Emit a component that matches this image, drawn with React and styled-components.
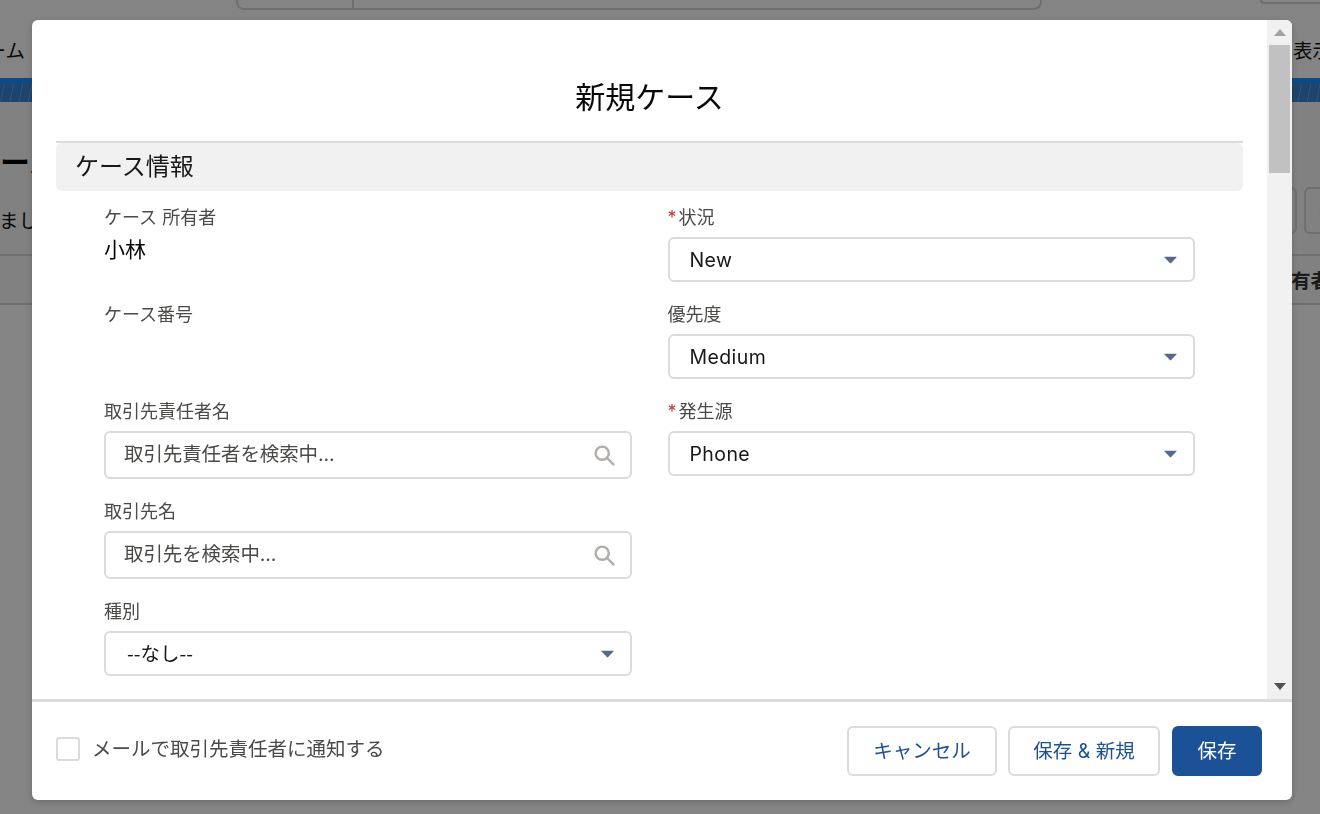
import React from "react";
import styled, { createGlobalStyle } from "styled-components";

const Global = createGlobalStyle`
  html, body { margin: 0; padding: 0; height: 100%; overflow: hidden; background: #fff; }
  * { box-sizing: border-box; }
  body { font-family: Inter, "Noto Sans CJK JP", sans-serif; color: #181818; }
`;

/* ---- page behind the dialog ---- */
const Page = styled.div`
  width: 1320px;
  height: 814px;
  overflow: hidden;
  background: #fafafa;
`;
const TopBar = styled.div`
  height: 10px;
  display: flex;
  justify-content: space-between;
  padding-left: 236px;
`;
const SearchStub = styled.div`
  width: 806px;
  height: 10px;
  border: 2px solid #d2d2d2;
  border-top: 0;
  border-radius: 0 0 8px 8px;
  display: flex;
`;
const SearchScope = styled.div`
  width: 116px;
  border-right: 2px solid #d2d2d2;
`;
const TopRightStub = styled.div`
  width: 60px;
  height: 4px;
  border: 2px solid #d2d2d2;
  border-top: 0;
  border-right: 0;
  border-radius: 0 0 0 8px;
`;
const NavRow = styled.div`
  height: 68px;
  display: flex;
  justify-content: space-between;
  align-items: center;
  font-size: 19.5px;
  color: #111;
  padding-top: 10px;
  overflow: hidden;
`;
const NavLeft = styled.span`
  margin-left: -33px;
`;
const NavRight = styled.span`
  margin-right: -12px;
  white-space: nowrap;
`;
const Stripe = styled.div`
  height: 24px;
  background:
    linear-gradient(#1a8cf8 0 6px, transparent 6px),
    repeating-linear-gradient(102deg, #3a82d0 0 5px, #5e9bd2 5px 6px, #3a82d0 6px 9px);
`;
const TitleArea = styled.div`
  height: 154px;
  background: #f3f3f3;
  border-bottom: 2px solid #d2d2d2;
  display: flex;
  justify-content: space-between;
  padding-top: 38px;
`;
const TitleText = styled.div`
  display: flex;
  flex-direction: column;
  margin-left: -30px;
  white-space: nowrap;
`;
const PageHeading = styled.div`
  font-size: 30px;
  font-weight: 700;
  line-height: 44px;
  color: #000;
`;
const PageNote = styled.div`
  font-size: 19.5px;
  line-height: 28px;
  margin-top: 23px;
  margin-left: 29px;
  color: #111;
`;
const PageActions = styled.div`
  display: flex;
  gap: 7px;
  margin-top: 47px;
  margin-right: -60px;
`;
const PageAction = styled.div`
  width: 76px;
  height: 47px;
  border: 2px solid #d2d2d2;
  border-radius: 6px;
  background: #f3f3f3;
  padding: 7px 0 0 13px;
  font-size: 19.5px;
  line-height: 28px;
  color: #aaa;
  white-space: nowrap;
`;
const TableHead = styled.div`
  height: 49px;
  background: #f3f3f3;
  border-bottom: 2px solid #d2d2d2;
  display: flex;
  justify-content: flex-end;
  align-items: center;
  font-size: 19.5px;
  font-weight: 700;
  color: #333;
  overflow: hidden;
`;
const TableHeadCell = styled.span`
  margin-right: -10px;
  white-space: nowrap;
`;

/* ---- dialog ---- */
const Scrim = styled.div`
  position: fixed;
  inset: 0;
  background: rgba(0, 0, 0, 0.47);
  display: flex;
  align-items: flex-start;
  padding: 20px 0 0 32px;
`;
const Modal = styled.div`
  width: 1260px;
  height: 780px;
  background: #fff;
  border-radius: 6px;
  overflow: hidden;
  display: flex;
  flex-direction: column;
  box-shadow: 0 2px 6px rgba(0, 0, 0, 0.2);
`;
const Upper = styled.div`
  height: 679px;
  display: flex;
  flex: none;
`;
const Body = styled.div`
  flex: 1;
  padding: 0 24px;
  overflow: hidden;
`;
const Title = styled.h2`
  margin: 0;
  padding: 56px 0 23px;
  text-align: center;
  font-size: 30px;
  line-height: 42px;
  font-weight: 400;
  color: #080707;
`;
const Section = styled.div`
  border-top: 2px solid #dddbda;
`;
const SectionHeading = styled.h3`
  margin: 0;
  height: 48px;
  padding: 0 0 5px 19px;
  display: flex;
  align-items: center;
  background: #f1f1f1;
  border-radius: 6px;
  font-size: 24px;
  font-weight: 400;
  color: #181818;
`;
const FormGrid = styled.div`
  display: grid;
  grid-template-columns: 1fr 1fr;
  column-gap: 36px;
  padding: 14px 48px 0;
`;
const Column = styled.div`
  display: flex;
  flex-direction: column;
`;
const Field = styled.div`
  padding-bottom: 20px;
`;
const Label = styled.div`
  height: 24px;
  line-height: 26px;
  margin-bottom: 8px;
  font-size: 18px;
  color: #4a4a48;
  white-space: nowrap;
`;
const Required = styled.span`
  color: #c23934;
  margin-right: 2px;
  font-size: 18px;
`;
const Value = styled.div`
  min-height: 53px;
  margin-top: -8px;
  padding-top: 6px;
  font-size: 21px;
  line-height: 30px;
  color: #080707;
`;
const SelectBox = styled.div`
  height: 45px;
  border: 2px solid #dddbda;
  border-radius: 6px;
  background: #fff;
  display: flex;
  align-items: center;
  justify-content: space-between;
  padding: 0 16px 0 20px;
  font-size: 19.5px;
  letter-spacing: 0.4px;
  color: #181818;
`;
const NoneValue = styled.span`
  font-family: "Noto Sans CJK JP", sans-serif;
  letter-spacing: 0;
  margin-left: 1px;
  margin-top: -3px;
`;
const InputBox = styled.div`
  height: 48px;
  border: 2px solid #dddbda;
  border-radius: 6px;
  background: #fff;
  display: flex;
  align-items: center;
  padding: 0 15px 0 18px;
`;
const SearchInput = styled.input`
  flex: 1;
  min-width: 0;
  border: 0;
  outline: 0;
  padding: 0 0 3px;
  background: transparent;
  font-family: inherit;
  font-size: 19.5px;
  letter-spacing: -0.1px;
  color: #3e3e3c;
  &::placeholder { color: #4a4a48; opacity: 1; }
`;
const Scrollbar = styled.div`
  width: 25px;
  flex: none;
  background: #f1f1f1;
  display: flex;
  flex-direction: column;
  align-items: center;
`;
const ScrollButton = styled.div`
  height: 25px;
  flex: none;
  display: flex;
  align-items: center;
  justify-content: center;
  width: 100%;
  margin-top: ${(p) => (p.$end ? "auto" : "0")};
`;
const Thumb = styled.div`
  width: 21px;
  height: 128px;
  background: #c1c1c1;
`;
const Footer = styled.div`
  flex: 1;
  border-top: 3px solid #dddbda;
  display: flex;
  align-items: center;
  justify-content: space-between;
  padding: 0 30px 0 24px;
`;
const Notify = styled.label`
  display: flex;
  align-items: center;
  gap: 12px;
  font-size: 19.5px;
  line-height: 24px;
  color: #4a4a48;
  margin-top: -5px;
`;
const Check = styled.input`
  appearance: none;
  margin: 0;
  width: 24px;
  height: 24px;
  border: 2px solid #dddbda;
  border-radius: 3px;
  background: #fff;
`;
const Actions = styled.div`
  display: flex;
  gap: 12px;
`;
const ActionsCancel = styled.div`
  margin-right: -1px;
`;
const Button = styled.button`
  height: 50px;
  width: ${(p) => p.$w}px;
  padding: 0 0 3px;
  border-radius: 6px;
  border: 2px solid ${(p) => (p.$primary ? "#1b5297" : "#dddbda")};
  background: ${(p) => (p.$primary ? "#1b5297" : "#fff")};
  color: ${(p) => (p.$primary ? "#fff" : "#1b5297")};
  font-family: inherit;
  font-size: 19.5px;
`;

const Caret = () => (
  <svg width="13" height="8" viewBox="0 0 14 8" aria-hidden="true">
    <path d="M1 0.5h12c.5 0 .7.5.4.9L7.4 7.5c-.2.2-.6.2-.8 0L.6 1.4C.3 1 .5.5 1 .5z" fill="#54698d" />
  </svg>
);

const SearchIcon = () => (
  <svg width="21" height="21" viewBox="0 0 21 21" fill="none" stroke="#b0adab" strokeWidth="2.4" aria-hidden="true">
    <circle cx="8.2" cy="8.2" r="6.6" />
    <path d="M13 13l6.4 6.4" strokeLinecap="round" />
  </svg>
);

const ScrollArrow = ({ down }) => (
  <svg width="12" height="7" viewBox="0 0 12 7" aria-hidden="true">
    <path d={down ? "M0 0h12L6 7z" : "M0 7h12L6 0z"} fill={down ? "#505050" : "#a3a3a3"} />
  </svg>
);

const SelectField = ({ label, value, required }) => (
  <Field>
    <Label>
      {required && <Required>*</Required>}
      {label}
    </Label>
    <SelectBox>
      {value}
      <Caret />
    </SelectBox>
  </Field>
);

const LookupField = ({ label, placeholder }) => (
  <Field>
    <Label>{label}</Label>
    <InputBox>
      <SearchInput placeholder={placeholder} />
      <SearchIcon />
    </InputBox>
  </Field>
);

const TextField = ({ label, value }) => (
  <Field>
    <Label>{label}</Label>
    <Value>{value}</Value>
  </Field>
);

export default function App() {
  return (
    <>
      <Global />
      <Page>
        <TopBar>
          <SearchStub>
            <SearchScope />
          </SearchStub>
          <TopRightStub />
        </TopBar>
        <NavRow>
          <NavLeft>ホーム</NavLeft>
          <NavRight>表示</NavRight>
        </NavRow>
        <Stripe />
        <TitleArea>
          <TitleText>
            <PageHeading>ケース</PageHeading>
            <PageNote>ました</PageNote>
          </TitleText>
          <PageActions>
            <PageAction />
            <PageAction>新規</PageAction>
          </PageActions>
        </TitleArea>
        <TableHead>
          <TableHeadCell>所有者</TableHeadCell>
        </TableHead>
      </Page>
      <Scrim>
        <Modal>
          <Upper>
            <Body>
              <Title>新規ケース</Title>
              <Section>
                <SectionHeading>ケース情報</SectionHeading>
                <FormGrid>
                  <Column>
                    <TextField label="ケース 所有者" value="小林" />
                    <TextField label="ケース番号" value="" />
                    <LookupField label="取引先責任者名" placeholder="取引先責任者を検索中..." />
                    <LookupField label="取引先名" placeholder="取引先を検索中..." />
                    <SelectField label="種別" value={<NoneValue>--なし--</NoneValue>} />
                  </Column>
                  <Column>
                    <SelectField label="状況" value="New" required />
                    <SelectField label="優先度" value="Medium" />
                    <SelectField label="発生源" value="Phone" required />
                  </Column>
                </FormGrid>
              </Section>
            </Body>
            <Scrollbar>
              <ScrollButton>
                <ScrollArrow />
              </ScrollButton>
              <Thumb />
              <ScrollButton $end>
                <ScrollArrow down />
              </ScrollButton>
            </Scrollbar>
          </Upper>
          <Footer>
            <Notify>
              <Check type="checkbox" />
              メールで取引先責任者に通知する
            </Notify>
            <Actions>
              <ActionsCancel>
                <Button $w={150}>キャンセル</Button>
              </ActionsCancel>
              <Button $w={152}>保存 &amp; 新規</Button>
              <Button $w={90} $primary>保存</Button>
            </Actions>
          </Footer>
        </Modal>
      </Scrim>
    </>
  );
}
